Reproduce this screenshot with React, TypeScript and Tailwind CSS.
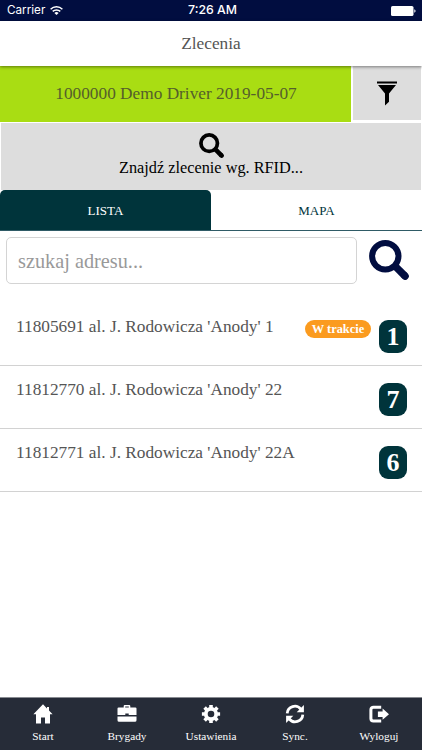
import type { ReactNode } from "react";

interface Order {
  id: string;
  address: string;
  count: number;
  status?: string;
}

const orders: Order[] = [
  { id: "11805691", address: "al. J. Rodowicza 'Anody' 1", count: 1, status: "W trakcie" },
  { id: "11812770", address: "al. J. Rodowicza 'Anody' 22", count: 7 },
  { id: "11812771", address: "al. J. Rodowicza 'Anody' 22A", count: 6 },
];

function SearchIcon({ className }: { className: string }) {
  return (
    <svg className={className} viewBox="0 0 40 40" fill="none" stroke="currentColor">
      <circle cx="16.3" cy="16.3" r="13.2" strokeWidth="6" />
      <path d="M25.5 25.5l10.6 10.6" strokeWidth="7.4" />
      <path d="M35.6 35.6l.6.6" strokeWidth="7.2" strokeLinecap="round" />
    </svg>
  );
}

function FilterIcon() {
  return (
    <svg className="h-[25px] w-5" viewBox="0 0 20 25" fill="currentColor">
      <path d="M0 .5h20v2H0zM1 4h18l-7 8.4v8.4L8 24.5V12.4z" />
    </svg>
  );
}

function WifiIcon() {
  return (
    <svg className="h-[9px] w-[13px]" viewBox="0 0 13 9" fill="none" stroke="currentColor" strokeWidth="1.5">
      <path d="M.6 3.2a8.5 8.5 0 0 1 11.8 0M2.7 5.4a5.5 5.5 0 0 1 7.6 0" />
      <path d="M4.4 7a3.1 3.1 0 0 1 4.2 0L6.5 9z" fill="currentColor" stroke="none" />
    </svg>
  );
}

function BatteryIcon() {
  return (
    <svg className="h-[10px] w-[25px]" viewBox="0 0 25 10" fill="currentColor">
      <rect width="22.5" height="10" rx="1.6" />
      <path d="M23.3 3.3c1.7.5 1.7 2.9 0 3.4z" />
    </svg>
  );
}

const navItems: { label: string; icon: ReactNode }[] = [
  {
    label: "Start",
    icon: <path d="M10 .3L.4 10.3H3v9.2h5v-6h4v6h5v-9.2h2.6L16 6.5V3h-2v1.5z" />,
  },
  {
    label: "Brygady",
    icon: (
      <path
        fillRule="evenodd"
        d="M6.7 3.4V2A1.1 1.1 0 0 1 7.8.9h4.4A1.1 1.1 0 0 1 13.3 2v1.4h5A1.2 1.2 0 0 1 19.5 4.6V11h-7.8V9.5H8.3V11H.5V4.6a1.2 1.2 0 0 1 1.2-1.2zm1.5 0h3.6v-1H8.2zM.5 12.4h19v3.8a1.6 1.6 0 0 1-1.6 1.6H2.1a1.6 1.6 0 0 1-1.6-1.6z"
      />
    ),
  },
  {
    label: "Ustawienia",
    icon: (
      <>
        <circle cx="10" cy="10" r="5.2" fill="none" stroke="currentColor" strokeWidth="3.8" />
        <path
          d="M10 .9v3M10 16.1v3M.9 10h3M16.1 10h3M3.6 3.6l2.1 2.1M14.3 14.3l2.1 2.1M3.6 16.4l2.1-2.1M14.3 5.7l2.1-2.1"
          stroke="currentColor"
          strokeWidth="3.6"
        />
      </>
    ),
  },
  {
    label: "Sync.",
    icon: (
      <>
        <path
          d="M2.2 9.3A7.6 7.6 0 0 1 15.8 5.2M17.8 10.7A7.6 7.6 0 0 1 4.2 14.8"
          fill="none"
          stroke="currentColor"
          strokeWidth="2.8"
        />
        <path d="M18.9.9v7.4h-7.2zM1.1 19.1v-7.4h7.2z" />
      </>
    ),
  },
  {
    label: "Wyloguj",
    icon: (
      <>
        <path
          d="M12.2 3.2H4.4a2.5 2.5 0 0 0-2.5 2.5v8.8A2.5 2.5 0 0 0 4.4 17h7.8"
          fill="none"
          stroke="currentColor"
          strokeWidth="3"
        />
        <path d="M8.9 7.5h4.7V4.6L20 10.2l-6.4 5.6v-2.9H8.9z" />
      </>
    ),
  },
];

function OrderRow({ order }: { order: Order }) {
  return (
    <li className="flex h-[63px] items-start border-b border-[#d2d2d2] pr-[15px] pl-4 text-[#555]">
      <span className="mt-[14px] flex-1 text-[17.3px] leading-5 whitespace-nowrap">
        {order.id} {order.address}
      </span>
      {order.status && (
        <span className="mt-[17px] mr-2 h-[18px] w-[66px] rounded-full bg-[#fb9b1f] text-center text-[12.4px] leading-[18px] font-bold whitespace-nowrap text-white">
          {order.status}
        </span>
      )}
      <span className="mt-[17px] h-[33px] w-7 rounded-[9px] bg-[#00343b] text-center text-[26px] leading-[34px] font-bold text-white">
        {order.count}
      </span>
    </li>
  );
}

export default function App() {
  return (
    <div className="flex h-[750px] w-[422px] flex-col overflow-hidden bg-white font-['Liberation_Serif',serif]">
      <div className="grid h-[21px] shrink-0 grid-cols-3 items-center bg-[#010d40] px-[7px] font-[Inter,sans-serif] text-[11.7px] text-white">
        <span className="flex items-center gap-[5px]">
          <span>Carrier</span>
          <WifiIcon />
        </span>
        <span className="pl-[3px] text-center text-[12.3px] font-medium whitespace-nowrap">7:26 AM</span>
        <span className="-mr-[1px] flex justify-end">
          <BatteryIcon />
        </span>
      </div>

      <header className="relative z-10 h-[45px] shrink-0 bg-white text-center text-[17.3px] leading-[45px] text-[#555] shadow-[0_1px_3px_rgba(0,0,0,0.45)]">
        Zlecenia
      </header>

      <div className="flex h-14 shrink-0">
        <div className="w-[351px] bg-[#a9dd13] pl-px text-center text-[17.3px] leading-[55px] text-[#555f2b]">
          1000000 Demo Driver 2019-05-07
        </div>
        <button className="mr-px mb-[2px] ml-[2px] flex flex-1 items-center justify-center bg-[#ddd] text-black">
          <FilterIcon />
        </button>
      </div>

      <button className="mx-px mt-px flex h-[67px] shrink-0 flex-col items-center bg-[#ddd] pt-[10px] text-[16.3px] leading-5 text-black">
        <SearchIcon className="h-[25px] w-[25px]" />
        <span>Znajdź zlecenie wg. RFID...</span>
      </button>

      <div className="flex h-[41px] shrink-0 border-b border-[#2f5b66] text-center text-[13px] leading-[41px]">
        <div className="w-1/2 rounded-t-[5px] bg-[#00343b] text-white">LISTA</div>
        <div className="w-1/2 text-[#00343b]">MAPA</div>
      </div>

      <div className="flex h-[72px] shrink-0 px-[6px] pt-[6px]">
        <input
          placeholder="szukaj adresu..."
          className="h-[47px] w-[351px] rounded-[5px] border border-[#d4d4d4] px-[11px] pt-[2px] text-[20.3px] outline-none placeholder:text-[#999]"
        />
        <SearchIcon className="mt-[3px] ml-3 h-10 w-10 text-[#010d40]" />
      </div>

      <ul className="flex-1">
        {orders.map((order) => (
          <OrderRow key={order.id} order={order} />
        ))}
      </ul>

      <nav className="grid h-[53px] shrink-0 grid-cols-5 border-t border-[#888b91] bg-[#262c38] px-px text-[11.3px] text-white">
        {navItems.map((item) => (
          <div key={item.label} className="flex flex-col items-center pt-[6px]">
            <svg className="h-5 w-5" viewBox="0 0 20 20" fill="currentColor">
              {item.icon}
            </svg>
            <span className="mt-[5px] leading-[14px]">{item.label}</span>
          </div>
        ))}
      </nav>
    </div>
  );
}
